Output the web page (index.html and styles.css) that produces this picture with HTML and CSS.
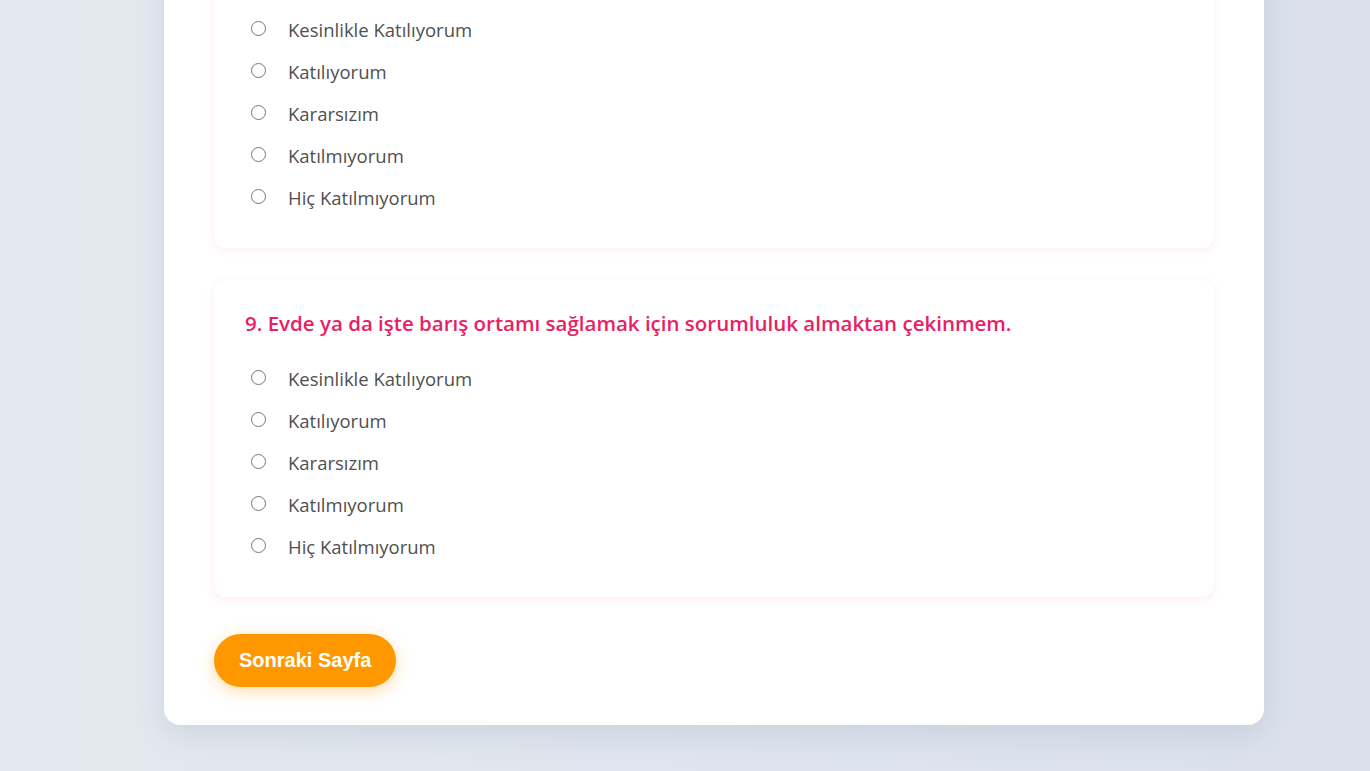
FILE: index.html
```html
<!DOCTYPE html>
<html lang="tr">
<head>
<meta charset="utf-8">
<title>Anket</title>
<link rel="stylesheet" href="styles.css">
</head>
<body>
<main class="sheet">
  <section class="question">
    <h2 class="q-title">8. Anlaşmazlıkları barışçıl yollarla çözmeye çalışırım.</h2>
    <div class="options">
      <label class="option"><input type="radio" name="q8"><span>Kesinlikle Katılıyorum</span></label>
      <label class="option"><input type="radio" name="q8"><span>Katılıyorum</span></label>
      <label class="option"><input type="radio" name="q8"><span>Kararsızım</span></label>
      <label class="option"><input type="radio" name="q8"><span>Katılmıyorum</span></label>
      <label class="option"><input type="radio" name="q8"><span>Hiç Katılmıyorum</span></label>
    </div>
  </section>
  <section class="question">
    <h2 class="q-title">9. Evde ya da işte barış ortamı sağlamak için sorumluluk almaktan çekinmem.</h2>
    <div class="options">
      <label class="option"><input type="radio" name="q9"><span>Kesinlikle Katılıyorum</span></label>
      <label class="option"><input type="radio" name="q9"><span>Katılıyorum</span></label>
      <label class="option"><input type="radio" name="q9"><span>Kararsızım</span></label>
      <label class="option"><input type="radio" name="q9"><span>Katılmıyorum</span></label>
      <label class="option"><input type="radio" name="q9"><span>Hiç Katılmıyorum</span></label>
    </div>
  </section>
  <div class="actions">
    <button class="next-btn" type="button">Sonraki Sayfa</button>
  </div>
</main>
</body>
</html>
```
FILE: styles.css
```css
* { box-sizing: border-box; }
html, body { height: 100%; }
body {
  margin: 0;
  min-height: 771px;
  overflow: hidden;
  background: linear-gradient(to right, #e4e9f0 0%, #dfe5ee 50%, #dae1eb 100%);
  font-family: "Open Sans", "Noto Sans", sans-serif;
  color: #4d4d4d;
}
.sheet {
  width: 1100px;
  margin: -119px 0 0 164px;
  background: #fff;
  border-radius: 16px;
  padding: 50px 50px 38px;
  box-shadow: 0 10px 30px rgba(60, 80, 110, 0.12);
  display: flex;
  flex-direction: column;
  gap: 32px;
}
.question {
  background: #fff;
  border-radius: 12px;
  padding: 30px 30px 30px 31px;
  box-shadow: 0 2px 8px rgba(255, 110, 145, 0.14);
}
.q-title {
  margin: 0 0 20px;
  font-size: 20.5px;
  line-height: 27px;
  font-weight: 600;
  color: #e91e63;
  white-space: nowrap;
}
.options { display: flex; flex-direction: column; }
.option {
  display: flex;
  align-items: center;
  height: 42px;
  font-size: 18.5px;
  color: #505050;
  cursor: pointer;
}
.option input {
  width: 15px;
  height: 15px;
  margin: 0 22px 2px 6px;
  accent-color: #e91e63;
}
.actions { margin-top: 5px; }
.next-btn {
  border: none;
  background: #ff9800;
  color: #fff;
  font-family: "Liberation Sans", Arial, sans-serif;
  font-weight: 700;
  font-size: 20px;
  line-height: 23px;
  padding: 15px 25px;
  border-radius: 30px;
  box-shadow: 0 4px 15px rgba(255, 152, 0, 0.35);
  cursor: pointer;
}
```
